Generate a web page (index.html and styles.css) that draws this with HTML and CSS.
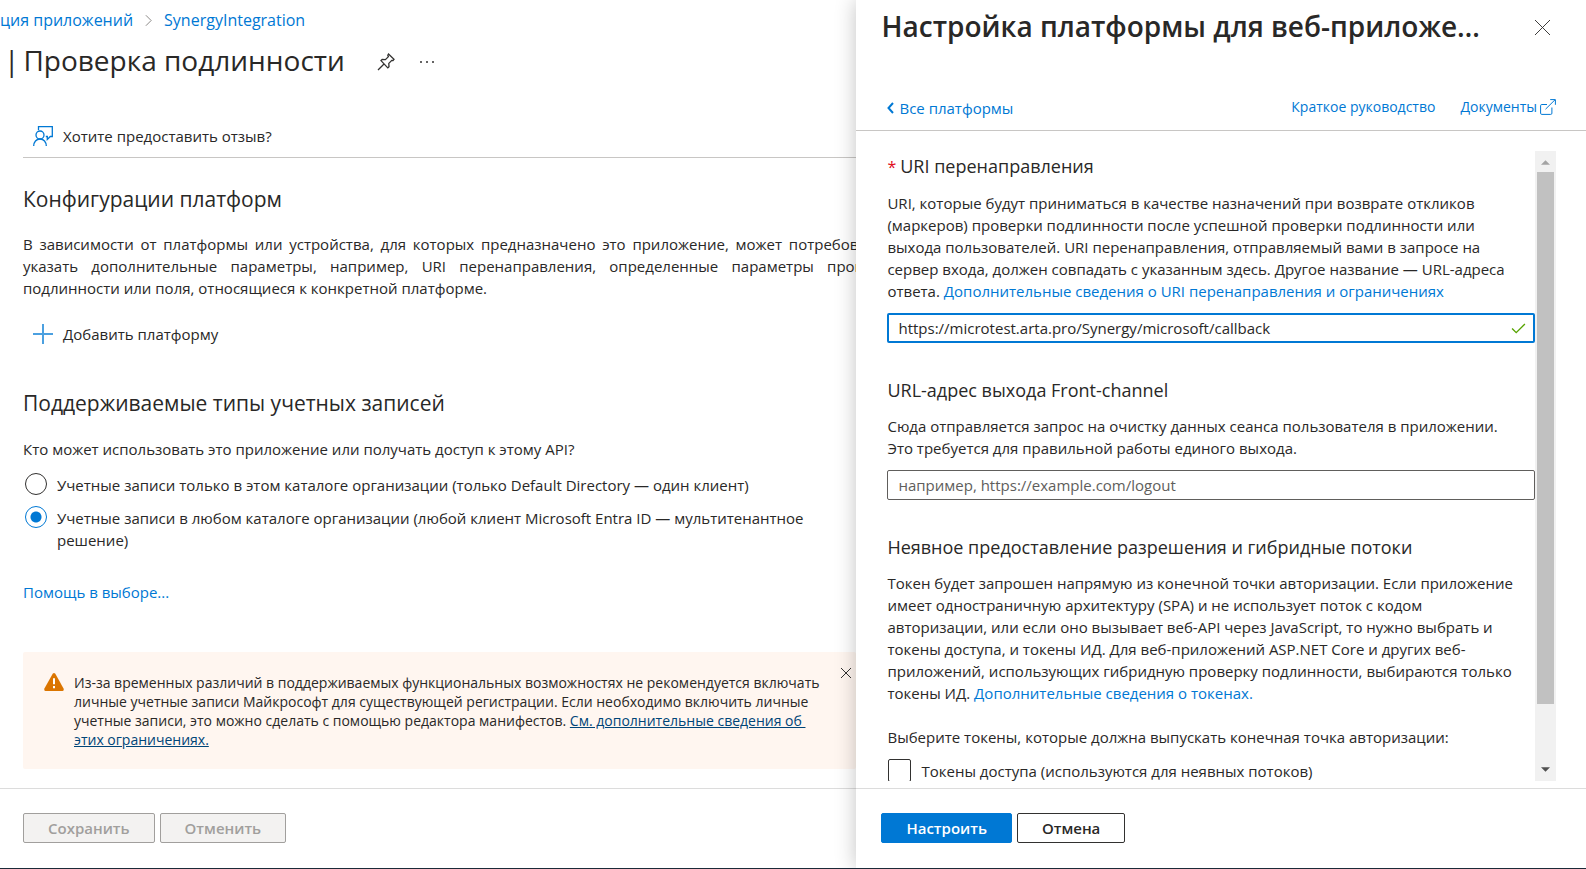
FILE: index.html
```html
<!DOCTYPE html>
<html lang="ru">
<head>
<meta charset="utf-8">
<title>Проверка подлинности</title>
<link rel="stylesheet" href="styles.css">
</head>
<body>
<div class="app">
  <main class="blade">
    <nav class="breadcrumb">
      <a href="#">ция приложений</a>
      <svg class="crumb-arrow" viewBox="0 0 8 14" aria-hidden="true"><path d="M1 1l6 6-6 6"/></svg>
      <a href="#">SynergyIntegration</a>
    </nav>
    <header class="title-row">
      <h1 class="title"><span>|</span><span>Проверка подлинности</span></h1>
      <button class="icon-button" aria-label="Закрепить">
        <svg class="pin" viewBox="0 0 18 18"><path d="M11.5 1l5.500 5.300-1 1.200-1.200-.1-3 3 .2 3.300-1.200 1.200L4 7.600l1.200-1.100 3.200.2 3-3-.6-1.400zM7 11L1 17"/></svg>
      </button>
      <button class="icon-button" aria-label="Дополнительно">
        <svg class="dots" viewBox="0 0 16 4"><circle cx="2" cy="2" r="1"/><circle cx="8" cy="2" r="1"/><circle cx="14" cy="2" r="1"/></svg>
      </button>
    </header>
    <div class="commands">
      <button class="command">
        <svg class="command-icon" viewBox="0 0 20 20"><path d="M5.500 4V.7h13.800v9.800h-2l-3 3v-3h-1.500"/><circle cx="7" cy="9" r="4"/><path d="M.7 20c0-4 2.600-7 6.300-7s6.300 3 6.300 7"/></svg>
        Хотите предоставить отзыв?
      </button>
    </div>
    <div class="content">
      <h2 class="heading">Конфигурации платформ</h2>
      <p class="intro">В зависимости от платформы или устройства, для которых предназначено это приложение, может потребоваться указать дополнительные параметры, например, URI перенаправления, определенные параметры проверки подлинности или поля, относящиеся к конкретной платформе.</p>
      <button class="command add">
        <svg class="command-icon plus" viewBox="0 0 20 20"><path d="M10 0v20M0 10h20"/></svg>
        Добавить платформу
      </button>
      <h2 class="heading accounts">Поддерживаемые типы учетных записей</h2>
      <fieldset class="choices">
        <legend class="question">Кто может использовать это приложение или получать доступ к этому API?</legend>
        <label class="choice"><input class="radio" type="radio" name="acc"><span>Учетные записи только в этом каталоге организации (только Default Directory — один клиент)</span></label>
        <label class="choice"><input class="radio" type="radio" name="acc" checked><span>Учетные записи в любом каталоге организации (любой клиент Microsoft Entra ID — мультитенантное<br>решение)</span></label>
      </fieldset>
      <a class="help" href="#">Помощь в выборе...</a>
      <section class="warning">
        <svg class="warning-icon" viewBox="0 0 20 18"><path class="tri" d="M8.700.8q1.300-1.600 2.600 0l8.400 15q.6 2-1 2.200H1.300q-1.600-.2-1-2.200z"/><path class="mark" d="M10 5.200v6M10 13v2.200"/></svg>
        <p class="warning-text">Из-за временных различий в поддерживаемых функциональных возможностях не рекомендуется включать<br>личные учетные записи Майкрософт для существующей регистрации. Если необходимо включить личные<br>учетные записи, это можно сделать с помощью редактора манифестов. <a class="dark-link" href="#">См. дополнительные сведения об&nbsp;<br>этих ограничениях.</a></p>
        <button class="warning-close" aria-label="Закрыть"><svg class="x-small" viewBox="0 0 10 10"><path d="M0 0l10 10M10 0L0 10"/></svg></button>
      </section>
    </div>
    <footer class="footer">
      <button class="btn save" disabled>Сохранить</button>
      <button class="btn undo" disabled>Отменить</button>
    </footer>
  </main>

  <aside class="panel">
    <header class="panel-head">
      <h2 class="panel-title">Настройка платформы для веб-приложений</h2>
      <button class="icon-button" aria-label="Закрыть"><svg class="x-large" viewBox="0 0 16 16"><path d="M0 0l16 16M16 0L0 16"/></svg></button>
    </header>
    <nav class="panel-nav">
      <a class="back" href="#"><svg class="back-arrow" viewBox="0 0 7 12"><path d="M6 1L1.500 6 6 11"/></svg>Все платформы</a>
      <a class="small-link" href="#">Краткое руководство</a>
      <a class="small-link docs" href="#">Документы<svg class="external" viewBox="0 0 16 16"><path d="M7 5.500H1.800Q.6 5.500.6 6.700v7.500q0 1.200 1.200 1.200h8.900q1.200 0 1.200-1.200V8.500M5.500 10.200L15 .8M10.200.6h5.200v5.200"/></svg></a>
    </nav>
    <div class="scroll-area">
      <form class="form">
        <label class="sub first" for="redirect"><span class="star">*</span>URI перенаправления</label>
        <p class="text">URI, которые будут приниматься в качестве назначений при возврате откликов<br>(маркеров) проверки подлинности после успешной проверки подлинности или<br>выхода пользователей. URI перенаправления, отправляемый вами в запросе на<br>сервер входа, должен совпадать с указанным здесь. Другое название — URL-адреса<br>ответа. <a href="#">Дополнительные сведения о URI перенаправления и ограничениях</a></p>
        <div class="field active">
          <input class="input" id="redirect" type="text" value="https://microtest.arta.pro/Synergy/microsoft/callback">
          <svg class="check" viewBox="0 0 16 12"><path d="M1 6l4.500 4.500L15 1"/></svg>
        </div>
        <label class="sub" for="logout">URL-адрес выхода Front-channel</label>
        <p class="text">Сюда отправляется запрос на очистку данных сеанса пользователя в приложении.<br>Это требуется для правильной работы единого выхода.</p>
        <div class="field"><input class="input" id="logout" type="text" placeholder="например, https://example.com/logout"></div>
        <h3 class="sub">Неявное предоставление разрешения и гибридные потоки</h3>
        <p class="text">Токен будет запрошен напрямую из конечной точки авторизации. Если приложение<br>имеет одностраничную архитектуру (SPA) и не использует поток с кодом<br>авторизации, или если оно вызывает веб-API через JavaScript, то нужно выбрать и<br>токены доступа, и токены ИД. Для веб-приложений ASP.NET Core и других веб-<br>приложений, использующих гибридную проверку подлинности, выбираются только<br>токены ИД. <a href="#">Дополнительные сведения о токенах.</a></p>
        <p class="text tokens">Выберите токены, которые должна выпускать конечная точка авторизации:</p>
        <label class="token"><input class="checkbox" type="checkbox">Токены доступа (используются для неявных потоков)</label>
      </form>
      <div class="scrollbar" aria-hidden="true">
        <svg class="arrow up" viewBox="0 0 10 5"><path d="M0 5l5-5 5 5z"/></svg>
        <div class="thumb"></div>
        <svg class="arrow down" viewBox="0 0 10 5"><path d="M0 0l5 5 5-5z"/></svg>
      </div>
    </div>
    <footer class="footer panel-footer">
      <button class="btn primary">Настроить</button>
      <button class="btn cancel">Отмена</button>
    </footer>
  </aside>
</div>
</body>
</html>
```
FILE: styles.css
```css
* { box-sizing: border-box; }
body {
  margin: 0;
  font: 15px/22px "Open Sans", "Noto Sans", sans-serif;
  color: #292827;
  background: #fff;
}
h1, h2, h3, p { margin: 0; font-weight: 400; }
a { color: #0078d4; text-decoration: none; }
button { font: inherit; color: inherit; background: none; border: 0; padding: 0; }
svg { display: block; flex: none; fill: none; stroke: #323130; overflow: visible; }
.app {
  display: grid;
  grid-template-columns: minmax(0, 54fr) minmax(0, 46fr);
  height: 100vh;
  overflow: hidden;
  border-bottom: 1px solid #1b2a38;
}
.blade { display: flex; flex-direction: column; min-height: 0; overflow: hidden; white-space: nowrap; }
.breadcrumb { display: flex; align-items: center; gap: 12px; height: 40px; font-size: 16px; }
.crumb-arrow { width: 7px; height: 13px; stroke: #797775; }
.title-row { display: flex; align-items: center; gap: 24px; height: 44px; padding-left: 4px; }
.title { display: flex; gap: 4px; font-size: 28px; line-height: 40px; margin: 0 8px 4px 0; }
.pin { width: 18px; height: 18px; stroke-width: 1.3; }
.dots { width: 16px; height: 4px; fill: #323130; stroke: none; }
.commands { margin: 31px 0 0 23px; height: 43px; border-bottom: 1px solid #c8c6c4; }
.command { display: flex; align-items: center; gap: 10px; padding-left: 10px; height: 42px; }
.command-icon { width: 20px; height: 20px; stroke: #0078d4; stroke-width: 1.3; }
.content { flex: 1; min-height: 0; padding: 27px 0 0 23px; }
.heading { font-size: 21px; line-height: 28px; }
.intro { width: 105%; margin-top: 20px; text-align: justify; white-space: normal; }
.add { margin-top: 14px; }
.plus { stroke: #4ba0e0; stroke-width: 2; }
.accounts { margin-top: 34px; }
.choices { border: 0; margin: 21px 0 0; padding: 0; }
.question { padding: 0; margin-bottom: 12px; }
.choice { display: flex; gap: 10px; margin-bottom: 9px; }
.choice span { padding-top: 2px; }
.radio {
  appearance: none;
  flex: none;
  width: 22px;
  height: 22px;
  margin: 1px 0 0 2px;
  border: 1px solid #323130;
  border-radius: 50%;
}
.radio:checked { border-color: #0078d4; background: radial-gradient(circle, #0078d4 5px, #fff 6px); }
.help { display: inline-block; margin-top: 21px; }
.warning { display: flex; align-items: flex-start; margin-top: 49px; padding: 21px 0 20px 21px; background: #fff6f0; border-radius: 2px; position: relative; }
.warning-icon { width: 20px; height: 18px; }
.tri { fill: #db7500; stroke: none; }
.mark { stroke: #fff; stroke-width: 2; }
.warning-text { font-size: 14px; line-height: 19px; margin-left: 10px; }
.dark-link { color: #004578; text-decoration: underline; }
.warning-close { position: absolute; right: 5px; top: 16px; }
.x-small { width: 10px; height: 10px; }
.footer { display: flex; align-items: center; gap: 5px; height: 80px; padding: 0 0 2px 23px; border-top: 1px solid #dcdcdc; }
.btn { height: 30px; border: 1px solid #323130; border-radius: 2px; font-weight: 600; padding: 0 24px; line-height: 20px; }
.btn:disabled { color: #a19f9d; border-color: #a19f9d; background: #f3f2f1; }
.panel { display: flex; flex-direction: column; min-height: 0; min-width: 0; background: #fff; box-shadow: 0 0 20px rgba(0, 0, 0, .24); z-index: 1; white-space: nowrap; }
.panel-head { display: flex; align-items: center; justify-content: space-between; height: 54px; padding: 0 36px 0 25px; }
.panel-title { width: 606px; overflow: hidden; text-overflow: ellipsis; font-size: 28px; line-height: 40px; margin-bottom: 2px; font-weight: 600; }
.x-large { width: 15px; height: 15px; }
.panel-nav { display: flex; align-items: center; height: 77px; padding: 31px 30px 0 31px; gap: 25px; border-bottom: 1px solid #c8c6c4; }
.back { display: flex; align-items: center; gap: 5px; margin-right: auto; }
.back-arrow { width: 7px; height: 12px; stroke: #0078d4; stroke-width: 2; }
.small-link { font-size: 14px; margin-bottom: 2px; }
.docs { display: flex; align-items: center; gap: 3px; }
.external { width: 16px; height: 16px; stroke: #0078d4; }
.scroll-area { display: flex; flex: 1; min-height: 0; margin: 20px 30px 7px 31px; }
.form { flex: 1; min-width: 0; overflow: hidden; }
.sub { display: block; font-size: 18px; line-height: 26px; margin: 34px 0 12px; }
.first { margin: 2px 0 12px; }
.star { color: #e00b1c; margin-right: 4px; font-size: 16px; }
.field { display: flex; align-items: center; height: 30px; margin-top: 11px; padding: 0 8px 0 10px; border: 1px solid #605e5c; border-radius: 2px; }
.active { border: 2px solid #0078d4; padding: 0 7px 0 9px; }
.input { flex: 1; min-width: 0; height: 24px; padding: 0; border: 0; outline: 0; font: inherit; color: inherit; background: none; }
.input::placeholder { color: #605e5c; opacity: 1; }
.check { width: 15px; height: 11px; stroke: #57a300; stroke-width: 1.5; }
.tokens { margin-top: 22px; }
.token { display: flex; align-items: center; gap: 10px; margin-top: 11px; }
.checkbox { appearance: none; flex: none; width: 23px; height: 23px; margin: 0 0 0 1px; border: 1px solid #323130; border-radius: 2px; }
.scrollbar { display: flex; flex-direction: column; align-items: center; width: 21px; padding: 9px 0; background: #f1f1f1; }
.arrow { width: 9px; height: 5px; stroke: none; fill: #a3a3a3; }
.down { fill: #505050; margin-top: auto; }
.thumb { width: 17px; height: 87%; margin-top: 7px; background: #c1c1c1; }
.panel-footer { padding-left: 25px; }
.primary { color: #fff; background: #0078d4; border-color: #0078d4; }
```
